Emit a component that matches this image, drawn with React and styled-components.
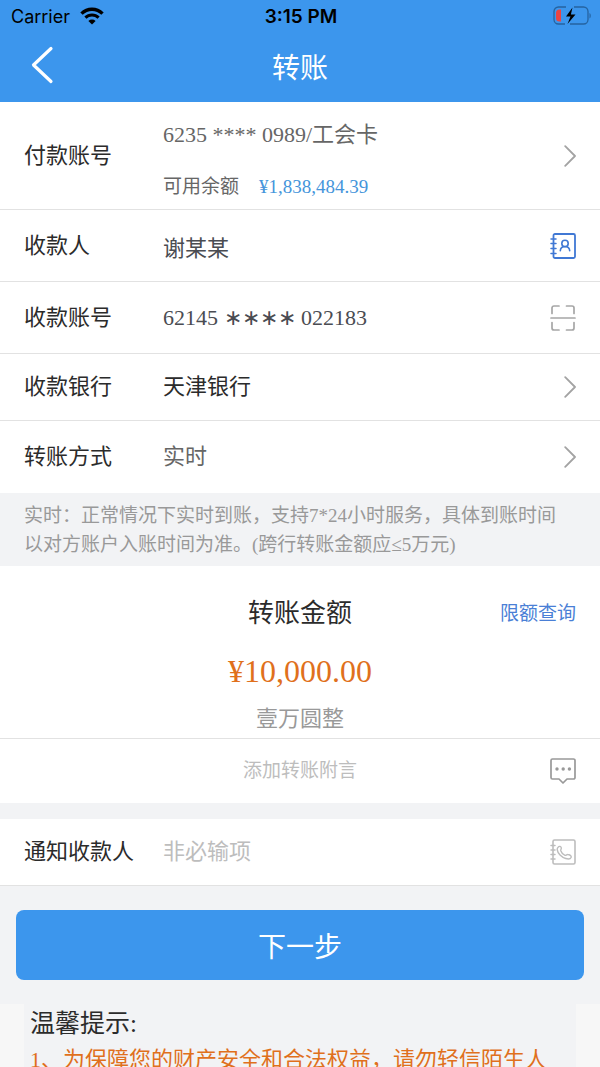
import React, { useState } from "react";
import styled, { createGlobalStyle } from "styled-components";

const COLORS = {
  primary: "#3c96ed",
  link: "#4a7fd6",
  balance: "#4595db",
  orange: "#e0701c",
  page: "#f2f3f5",
  line: "#e2e2e2",
  dark: "#2b2b2b",
  value: "#4a4c52",
  text: "#666666",
  muted: "#999999",
  placeholder: "#bdbdbd",
};

const App = () => {
  const [payee, setPayee] = useState("谢某某");
  const [account, setAccount] = useState("62145 ∗∗∗∗ 022183");
  const [memo, setMemo] = useState("");
  const [notify, setNotify] = useState("");

  return (
    <Page>
      <GlobalStyle />
      <Header>
        <StatusBar>
          <Carrier>
            Carrier
            <WifiIcon />
          </Carrier>
          <Clock>3:15 PM</Clock>
          <BatteryIcon />
        </StatusBar>
        <NavBar>
          <IconButton type="button" aria-label="返回">
            <BackIcon />
          </IconButton>
          <Title>转账</Title>
        </NavBar>
      </Header>

      <main>
        <Row $height={108}>
          <Label as="span">付款账号</Label>
          <PayerInfo>
            <Value>6235 **** 0989/工会卡</Value>
            <Balance>
              可用余额 <BalanceAmount>¥1,838,484.39</BalanceAmount>
            </Balance>
          </PayerInfo>
          <IconButton type="button" aria-label="选择付款账号">
            <ArrowIcon />
          </IconButton>
        </Row>
        <Row $height={72}>
          <Label htmlFor="payee">收款人</Label>
          <Field
            id="payee"
            value={payee}
            onChange={(e) => setPayee(e.target.value)}
          />
          <IconButton type="button" aria-label="通讯录">
            <ContactIcon />
          </IconButton>
        </Row>
        <Row $height={72}>
          <Label htmlFor="account">收款账号</Label>
          <Field
            id="account"
            value={account}
            onChange={(e) => setAccount(e.target.value)}
          />
          <IconButton type="button" aria-label="扫描">
            <ScanIcon />
          </IconButton>
        </Row>
        <Row $height={67}>
          <Label as="span">收款银行</Label>
          <Value $color={COLORS.dark}>天津银行</Value>
          <IconButton type="button" aria-label="选择收款银行">
            <ArrowIcon />
          </IconButton>
        </Row>
        <Row $height={72} $last>
          <Label as="span">转账方式</Label>
          <Value>实时</Value>
          <IconButton type="button" aria-label="选择转账方式">
            <ArrowIcon />
          </IconButton>
        </Row>

        <Notice>
          实时：正常情况下实时到账，支持7*24小时服务，具体到账时间以对方账户入账时间为准。(跨行转账金额应≤5万元)
        </Notice>

        <AmountPanel>
          <AmountHead>
            <AmountTitle>转账金额</AmountTitle>
            <LimitLink href="#limit">限额查询</LimitLink>
          </AmountHead>
          <Amount>¥10,000.00</Amount>
          <AmountWords>壹万圆整</AmountWords>
        </AmountPanel>
        <MemoRow>
          <MemoField
            aria-label="转账附言"
            placeholder="添加转账附言"
            value={memo}
            onChange={(e) => setMemo(e.target.value)}
          />
          <IconButton type="button" aria-label="常用附言">
            <ChatIcon />
          </IconButton>
        </MemoRow>

        <NotifyRow $height={67}>
          <Label htmlFor="notify">通知收款人</Label>
          <Field
            id="notify"
            placeholder="非必输项"
            value={notify}
            onChange={(e) => setNotify(e.target.value)}
          />
          <IconButton type="button" aria-label="选择手机号">
            <PhoneBookIcon />
          </IconButton>
        </NotifyRow>

        <NextButton type="button">下一步</NextButton>

        <Tips>
          <TipsTitle>温馨提示:</TipsTitle>
          <TipsText>1、为保障您的财产安全和合法权益，请勿轻信陌生人</TipsText>
        </Tips>
      </main>
    </Page>
  );
};

export default App;

const WifiIcon = () => (
  <svg width="24" height="18" viewBox="0 0 24 18" fill="none" stroke="#000">
    <path d="M1.5 6.6a15 15 0 0 1 21 0" strokeWidth="3.4" />
    <path d="M5.4 10.6a9.4 9.4 0 0 1 13.2 0" strokeWidth="3" />
    <path d="M12 17.6 8.4 14a5.2 5.2 0 0 1 7.2 0z" fill="#000" stroke="none" />
  </svg>
);

const BatteryIcon = () => (
  <svg width="38" height="20" viewBox="0 0 38 20" fill="none">
    <path
      d="M13 1H5.500a4.500 4.500 0 0 0-4.500 4.500v8A4.500 4.500 0 0 0 5.500 18H12M21 1h9.500A4.500 4.500 0 0 1 35 5.500v8a4.500 4.500 0 0 1-4.500 4.500H17"
      stroke="#2563a0"
      strokeWidth="1.300"
    />
    <path d="M36.500 7v5.500c1.700-.8 1.700-4.700 0-5.500z" fill="#2563a0" />
    <path d="M6.500 3.500H8v12H6.500a3.500 3.500 0 0 1-3.500-3.500V7a3.500 3.500 0 0 1 3.500-3.500z" fill="#ea4444" />
    <path d="M19.500 1.500 13 10.500h4.500L14.500 18 22.500 8.500h-4.600z" fill="#000" />
  </svg>
);

const BackIcon = () => (
  <svg width="24" height="38" viewBox="0 0 24 38" fill="none" stroke="#fff">
    <path d="M21 2.500 3.500 19 21 35.500" strokeWidth="3.200" strokeLinecap="round" strokeLinejoin="round" />
  </svg>
);

const ArrowIcon = () => (
  <svg width="12" height="22" viewBox="0 0 12 22" fill="none" stroke="#a3a3a3">
    <path d="M1.200 1.200 11 11l-9.800 9.800" strokeWidth="1.800" strokeLinecap="round" strokeLinejoin="round" />
  </svg>
);

const ContactIcon = () => (
  <svg width="26" height="26" viewBox="0 0 26 26" fill="none" stroke="#4078d4" strokeWidth="1.800" strokeLinecap="round">
    <rect x="3.500" y="1" width="21.500" height="24" rx="1.500" />
    <path d="M1 6h5M1 10.500h5M1 15.500h5M1 20.500h5" strokeWidth="1.500" />
    <circle cx="15" cy="10.500" r="3.200" strokeWidth="1.600" />
    <path d="M10.300 17.800c.2-3 2-4.300 4.700-4.300s4.500 1.300 4.700 4.300" strokeWidth="1.600" />
  </svg>
);

const ScanIcon = () => (
  <svg width="26" height="26" viewBox="0 0 26 26" fill="none" stroke="#a6a6a6" strokeWidth="1.700" strokeLinecap="round">
    <path d="M2 8.500V3a2 2 0 0 1 2-2h5M16.500 1H22a2 2 0 0 1 2 2v5.500M24 17.500V23a2 2 0 0 1-2 2h-5.500M9 25H4a2 2 0 0 1-2-2v-5.500" />
    <path d="M1 13h24" />
  </svg>
);

const ChatIcon = () => (
  <svg width="26" height="26" viewBox="0 0 26 26" fill="none" stroke="#999" strokeWidth="1.700" strokeLinejoin="round">
    <path d="M3 1h20.500A1.500 1.500 0 0 1 25 2.500v17a1.500 1.500 0 0 1-1.500 1.500H17l-4 4-4-4H2.500A1.500 1.500 0 0 1 1 19.500v-17A1.500 1.500 0 0 1 2.500 1z" />
    <g fill="#999" stroke="none">
      <circle cx="7" cy="11" r="1.700" />
      <circle cx="13.200" cy="11" r="1.700" />
      <circle cx="19.400" cy="11" r="1.700" />
    </g>
  </svg>
);

const PhoneBookIcon = () => (
  <svg width="26" height="26" viewBox="0 0 26 26" fill="none" stroke="#bdbdbd" strokeWidth="1.600" strokeLinecap="round" strokeLinejoin="round">
    <rect x="3" y="1" width="22" height="24" rx="1.500" />
    <path d="M1 6.500h4M1 11h4M1 15.500h4M1 20h4" strokeWidth="1.500" />
    <path
      d="M8.300 8c1-1.200 2.700-.6 3 .8.200 1.200-.8 1.700-.5 2.900.6 1.800 2.300 3.900 4.200 4.600 1.200.4 1.700-.9 2.900-.8 1.700.1 3.700 1.300 3.300 2.700-.6 1.500-3 2-5.400 1.300-4.400-1.200-8.100-5.100-8.600-8.900-.1-1.100.3-1.900 1.100-2.600z"
      strokeWidth="1.400"
    />
  </svg>
);

const GlobalStyle = createGlobalStyle`
  * {
    box-sizing: border-box;
  }
  body {
    margin: 0;
    background-color: ${COLORS.page};
  }
  body, input, button {
    font-family: "Liberation Serif", "Noto Sans CJK SC", serif;
  }
  h1, h2, p {
    margin: 0;
    font-weight: 400;
  }
  svg {
    display: block;
  }
`;

const Page = styled.div`
  width: 100%;
  color: ${COLORS.dark};
`;

const Header = styled.header`
  color: white;
  background-color: ${COLORS.primary};
`;

const StatusBar = styled.div`
  height: 32px;
  padding: 0 9px 0 11px;
  display: grid;
  grid-template-columns: 1fr auto 1fr;
  align-items: center;
  color: black;
  font-family: Inter, "Liberation Sans", sans-serif;
  font-size: 18px;

  > svg {
    justify-self: end;
  }
`;

const Carrier = styled.span`
  display: flex;
  align-items: center;
  gap: 10px;
`;

const Clock = styled.span`
  font-size: 19px;
  font-weight: 600;
`;

const NavBar = styled.div`
  height: 70px;
  padding: 0 30px;
  display: grid;
  grid-template-columns: 24px 1fr 24px;
  align-items: start;
`;

const Title = styled.h1`
  padding-top: 18px;
  font-size: 28px;
  line-height: 38px;
  text-align: center;
`;

const IconButton = styled.button`
  padding: 0;
  border: none;
  background: none;
  cursor: pointer;

  ${NavBar} & {
    padding-top: 14px;
  }
`;

const Row = styled.div`
  min-height: ${(props) => props.$height}px;
  padding: 0 24px;
  display: grid;
  grid-template-columns: 139px 1fr auto;
  align-items: center;
  background-color: white;
  border-bottom: ${(props) => (props.$last ? "none" : `1px solid ${COLORS.line}`)};
`;

const Label = styled.label`
  font-size: 22px;
  line-height: 32px;
`;

const Value = styled.span`
  font-size: 22px;
  line-height: 32px;
  color: ${(props) => props.$color || COLORS.text};
`;

const Field = styled.input`
  width: 100%;
  height: 40px;
  padding: 0;
  border: none;
  outline: none;
  background: none;
  font-size: 22px;
  color: ${COLORS.value};

  &::placeholder {
    color: ${COLORS.placeholder};
  }
`;

const PayerInfo = styled.div`
  padding-top: 10px;
  display: flex;
  flex-direction: column;
  gap: 20px;
`;

const Balance = styled.span`
  display: flex;
  gap: 20px;
  font-size: 19px;
  line-height: 32px;
  color: ${COLORS.text};
`;

const BalanceAmount = styled.span`
  color: ${COLORS.balance};
`;

const Notice = styled.p`
  padding: 8px 32px 7px 24px;
  font-size: 19px;
  line-height: 29px;
  color: ${COLORS.muted};
`;

const AmountPanel = styled.section`
  padding: 30px 24px 3px;
  text-align: center;
  background-color: white;
  border-bottom: 1px solid ${COLORS.line};
`;

const AmountHead = styled.div`
  display: grid;
  grid-template-columns: 1fr auto 1fr;
  align-items: center;
`;

const AmountTitle = styled.h2`
  grid-column: 2;
  font-size: 26px;
  line-height: 36px;
`;

const LimitLink = styled.a`
  justify-self: end;
  font-size: 19px;
  line-height: 32px;
  color: ${COLORS.link};
  text-decoration: none;
`;

const Amount = styled.p`
  margin: 19px 0 12px;
  font-size: 32px;
  line-height: 40px;
  color: ${COLORS.orange};
`;

const AmountWords = styled.p`
  font-size: 22px;
  line-height: 32px;
  color: ${COLORS.muted};
`;

const MemoRow = styled.div`
  min-height: 64px;
  padding: 0 24px;
  display: grid;
  grid-template-columns: 1fr auto;
  align-items: center;
  background-color: white;
`;

const MemoField = styled(Field)`
  padding-left: 26px;
  font-size: 19px;
  text-align: center;
`;

const NotifyRow = styled(Row)`
  margin-top: 16px;
`;

const NextButton = styled.button`
  display: block;
  width: calc(100% - 32px);
  height: 70px;
  margin: 24px 16px;
  border: none;
  border-radius: 8px;
  font-size: 28px;
  color: white;
  background-color: ${COLORS.primary};
  cursor: pointer;
`;

const Tips = styled.section`
  padding: 0 24px;
  background-color: #f7f7f7;
`;

const TipsTitle = styled.h2`
  padding: 0 6px;
  font-size: 25px;
  line-height: 40px;
  background-color: ${COLORS.page};
`;

const TipsText = styled.p`
  padding: 0 6px;
  font-size: 22px;
  line-height: 32px;
  color: ${COLORS.orange};
  background-color: ${COLORS.page};
`;
